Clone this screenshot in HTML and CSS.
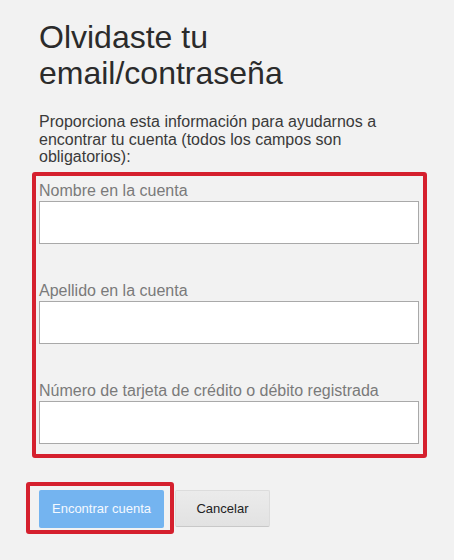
FILE: index.html
```html
<!DOCTYPE html>
<html lang="es">
<head>
<meta charset="utf-8">
<title>Olvidaste tu email/contraseña</title>
<link rel="stylesheet" href="styles.css">
</head>
<body>
<main class="page">
  <h1 class="title">Olvidaste tu email/contraseña</h1>
  <p class="intro">Proporciona esta información para ayudarnos a encontrar tu cuenta (todos los campos son obligatorios):</p>
  <div class="fields">
    <div class="field">
      <label class="label" for="f1">Nombre en la cuenta</label>
      <input class="input" id="f1" type="text">
    </div>
    <div class="field">
      <label class="label" for="f2">Apellido en la cuenta</label>
      <input class="input" id="f2" type="text">
    </div>
    <div class="field">
      <label class="label" for="f3">Número de tarjeta de crédito o débito registrada</label>
      <input class="input" id="f3" type="text">
    </div>
  </div>
  <div class="actions">
    <span class="highlight">
      <button class="btn btn-primary" type="button">Encontrar cuenta</button>
    </span>
    <button class="btn btn-secondary" type="button">Cancelar</button>
  </div>
</main>
</body>
</html>
```
FILE: styles.css
```css
* { box-sizing: border-box; }
html, body { margin: 0; padding: 0; }
body {
  background: #f2f2f2;
  font-family: "Liberation Sans", Arial, sans-serif;
  color: #333;
  width: 454px;
  height: 560px;
  overflow: hidden;
}
.page {
  padding: 19px 0 0 39px;
}
.title {
  margin: 0;
  width: 300px;
  font-size: 32px;
  line-height: 36px;
  font-weight: normal;
  color: #2b2b2b;
}
.intro {
  margin: 22px 0 0 0;
  width: 370px;
  font-size: 16px;
  line-height: 17.5px;
  color: #3a3a3a;
}
.fields {
  margin: 6px 0 0 -7px;
  width: 395px;
  border: 4px solid #d5202e;
  border-radius: 3px;
  padding: 6px 4px 10px 3px;
  display: flex;
  flex-direction: column;
  gap: 38px;
}
.field {
  display: flex;
  flex-direction: column;
}
.label {
  font-size: 16px;
  line-height: 18px;
  color: #7a7a7a;
}
.input {
  margin-top: 1px;
  width: 380px;
  height: 43px;
  border: 1px solid #a9a9a9;
  border-radius: 0;
  background: #fff;
  font: inherit;
}
.actions {
  margin-top: 32px;
  display: flex;
  align-items: flex-start;
  gap: 11px;
}
.highlight {
  position: relative;
  display: inline-flex;
}
.highlight::before {
  content: "";
  position: absolute;
  left: -13px;
  top: -8px;
  right: -10px;
  bottom: -6px;
  border: 4px solid #d5202e;
  border-radius: 3px;
  pointer-events: none;
}
.btn {
  font-family: "Liberation Sans", Arial, sans-serif;
  font-size: 13px;
  height: 38px;
  border-radius: 2px;
  padding: 0;
  cursor: pointer;
}
.btn-primary {
  width: 125px;
  background: #74b4f0;
  color: #f4f9ff;
  border: 0;
}
.btn-secondary {
  width: 95px;
  height: 37px;
  background: linear-gradient(#ebebeb, #e2e2e2);
  color: #222;
  border: 1px solid #dcdcdc;
  border-bottom-color: #c8c8c8;
}
```
